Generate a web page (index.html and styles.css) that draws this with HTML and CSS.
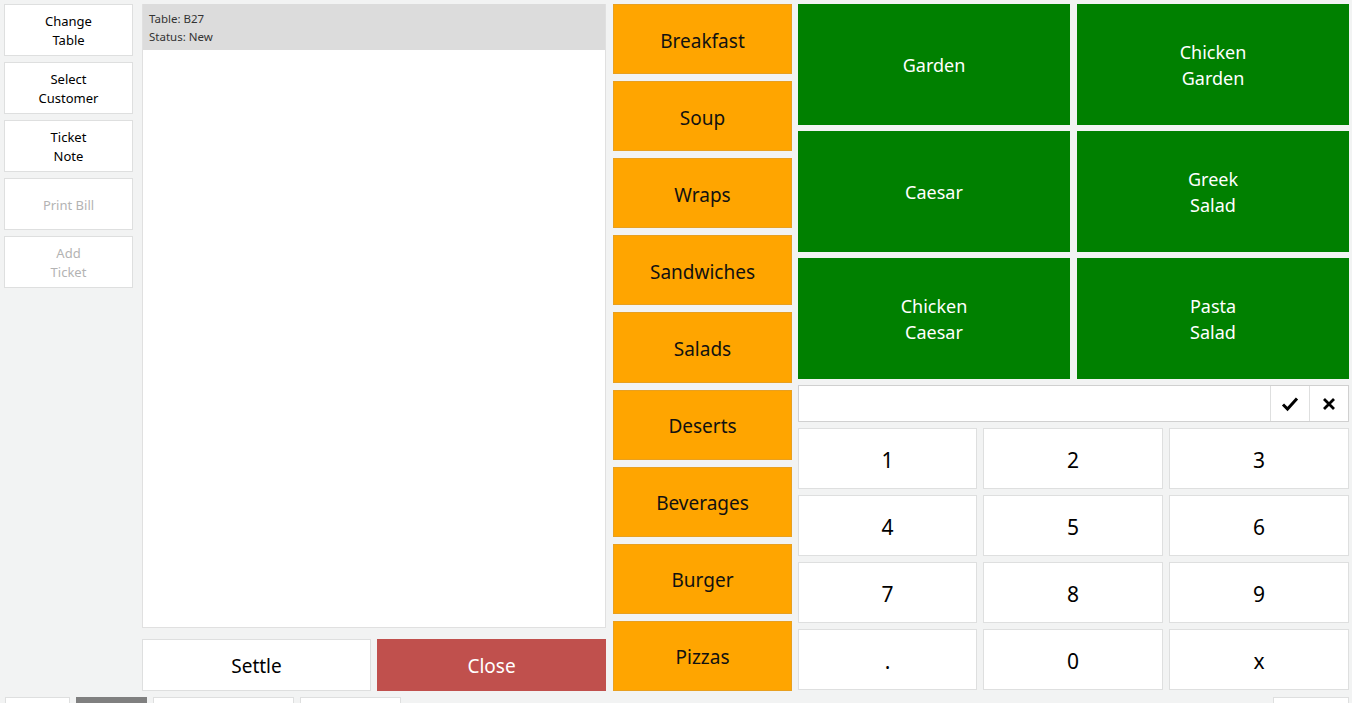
FILE: index.html
```html
<!DOCTYPE html>
<html lang="en">
<head>
<meta charset="UTF-8" />
<title>POS - Ticket</title>
<link rel="stylesheet" href="styles.css">
</head>
<body>

<div class="pos">
  <div class="actions">
    <button class="side-btn">Change<br>Table</button>
    <button class="side-btn">Select<br>Customer</button>
    <button class="side-btn">Ticket<br>Note</button>
    <button class="side-btn disabled">Print Bill</button>
    <button class="side-btn disabled">Add<br>Ticket</button>
  </div>

  <div class="ticket-col">
    <div class="ticket">
      <div class="ticket-head">
        Table: B27<br>
        Status: New
      </div>
    </div>
    <div class="ticket-buttons">
      <button class="settle">Settle</button>
      <button class="close">Close</button>
    </div>
  </div>

  <div class="categories">
    <button class="cat">Breakfast</button>
    <button class="cat">Soup</button>
    <button class="cat">Wraps</button>
    <button class="cat">Sandwiches</button>
    <button class="cat">Salads</button>
    <button class="cat">Deserts</button>
    <button class="cat">Beverages</button>
    <button class="cat">Burger</button>
    <button class="cat">Pizzas</button>
  </div>

  <div class="right-col">
    <div class="menu-items">
      <button class="item">Garden</button>
      <button class="item">Chicken<br>Garden</button>
      <button class="item">Caesar</button>
      <button class="item">Greek<br>Salad</button>
      <button class="item">Chicken<br>Caesar</button>
      <button class="item">Pasta<br>Salad</button>
    </div>

    <div class="entry">
      <input type="text" class="entry-input" />
      <button class="entry-btn">
        <svg width="18" height="16" viewBox="0 0 18 16"><path d="M2 8.5 L6.5 13 L16 2.5" fill="none" stroke="#000" stroke-width="3"/></svg>
      </button>
      <button class="entry-btn">
        <svg width="14" height="14" viewBox="0 0 14 14"><path d="M2 2 L12 12 M12 2 L2 12" fill="none" stroke="#000" stroke-width="2.8"/></svg>
      </button>
    </div>

    <div class="numpad">
      <button class="key">1</button>
      <button class="key">2</button>
      <button class="key">3</button>
      <button class="key">4</button>
      <button class="key">5</button>
      <button class="key">6</button>
      <button class="key">7</button>
      <button class="key">8</button>
      <button class="key">9</button>
      <button class="key">.</button>
      <button class="key">0</button>
      <button class="key">x</button>
    </div>
  </div>
</div>

<div class="tabs">
  <div class="tab t1"></div>
  <div class="tab t2 active"></div>
  <div class="tab t3"></div>
  <div class="tab t4"></div>
  <div class="spacer"></div>
  <div class="tab t5"></div>
</div>

</body>
</html>
```

FILE: styles.css
```css
body {
  margin: 0;
  height: 703px;
  overflow: hidden;
  background-color: #f2f3f3;
  font-family: "Noto Sans", "Open Sans", sans-serif;
  color: #000;
}

button {
  font-family: inherit;
  margin: 0;
  padding: 2px 0 0;
  cursor: pointer;
  color: #000;
}

.pos {
  display: flex;
  height: 687px;
  padding: 4px 3px 0 4px;
}

/* left action buttons */
.actions {
  width: 129px;
  display: flex;
  flex-direction: column;
  gap: 6px;
  margin-right: 9px;
}

.side-btn {
  height: 52px;
  background: #fff;
  border: 1px solid #dedfdf;
  font-size: 13px;
  line-height: 19px;
}

.side-btn.disabled {
  color: #b3b3b3;
}

/* ticket */
.ticket-col {
  width: 464px;
  display: flex;
  flex-direction: column;
  margin-right: 7px;
}

.ticket {
  height: 624px;
  box-sizing: border-box;
  background: #fff;
  border: 1px solid #e0e0e0;
  border-top: none;
}

.ticket-head {
  background-color: #dcdcdc;
  height: 46px;
  box-sizing: border-box;
  padding: 6px 6px;
  font-size: 11.5px;
  line-height: 18px;
  color: #333;
}

.ticket-buttons {
  display: flex;
  gap: 6px;
  margin-top: 11px;
  height: 52px;
}

.settle, .close {
  flex: 1 1 0;
  font-size: 19px;
  padding-top: 1px;
}

.settle {
  background: #fff;
  border: 1px solid #dedfdf;
}

.close {
  background-color: #c0504d;
  border: 1px solid #c0504d;
  color: #fff;
}

/* categories */
.categories {
  width: 179px;
  display: grid;
  grid-template-rows: repeat(9, 1fr);
  gap: 7px;
  margin-right: 6px;
}

.cat {
  background-color: #ffa500;
  border: 1px solid #e8a020;
  font-size: 19px;
  padding-top: 3px;
  color: #111;
}

/* right side */
.right-col {
  width: 551px;
  display: flex;
  flex-direction: column;
  gap: 6px;
}

.menu-items {
  display: grid;
  grid-template-columns: 1fr 1fr;
  grid-template-rows: repeat(3, 121px);
  gap: 6px 7px;
}

.item {
  background-color: #008000;
  border: none;
  color: #fff;
  font-size: 18px;
  line-height: 26px;
  padding-top: 1px;
}

.entry {
  display: flex;
  height: 37px;
  background: #fff;
  border: 1px solid #d0d0d0;
  box-sizing: border-box;
}

.entry-input {
  flex: 1;
  border: none;
  outline: none;
  font-size: 16px;
  padding: 0 8px;
}

.entry-btn {
  width: 39px;
  padding: 0;
  background: #fff;
  border: none;
  border-left: 1px solid #dedfdf;
  display: flex;
  align-items: center;
  justify-content: center;
}

.numpad {
  display: grid;
  grid-template-columns: 179px 180px 180px;
  grid-template-rows: repeat(4, 61px);
  gap: 6px;
}

.key {
  background: #fff;
  border: 1px solid #dedfdf;
  font-size: 21px;
}

/* bottom tabs */
.tabs {
  display: flex;
  margin-top: 6px;
  padding: 0 3px 0 5px;
  gap: 6px;
}

.tab {
  height: 24px;
  background: #fff;
  border: 1px solid #dedfdf;
  box-sizing: border-box;
}

.tab.active {
  background-color: #808080;
  border-color: #808080;
}

.t1 { width: 65px; }
.t2 { width: 71px; }
.t3 { width: 141px; }
.t4 { width: 101px; }
.t5 { width: 76px; }

.spacer {
  flex: 1;
}
```
